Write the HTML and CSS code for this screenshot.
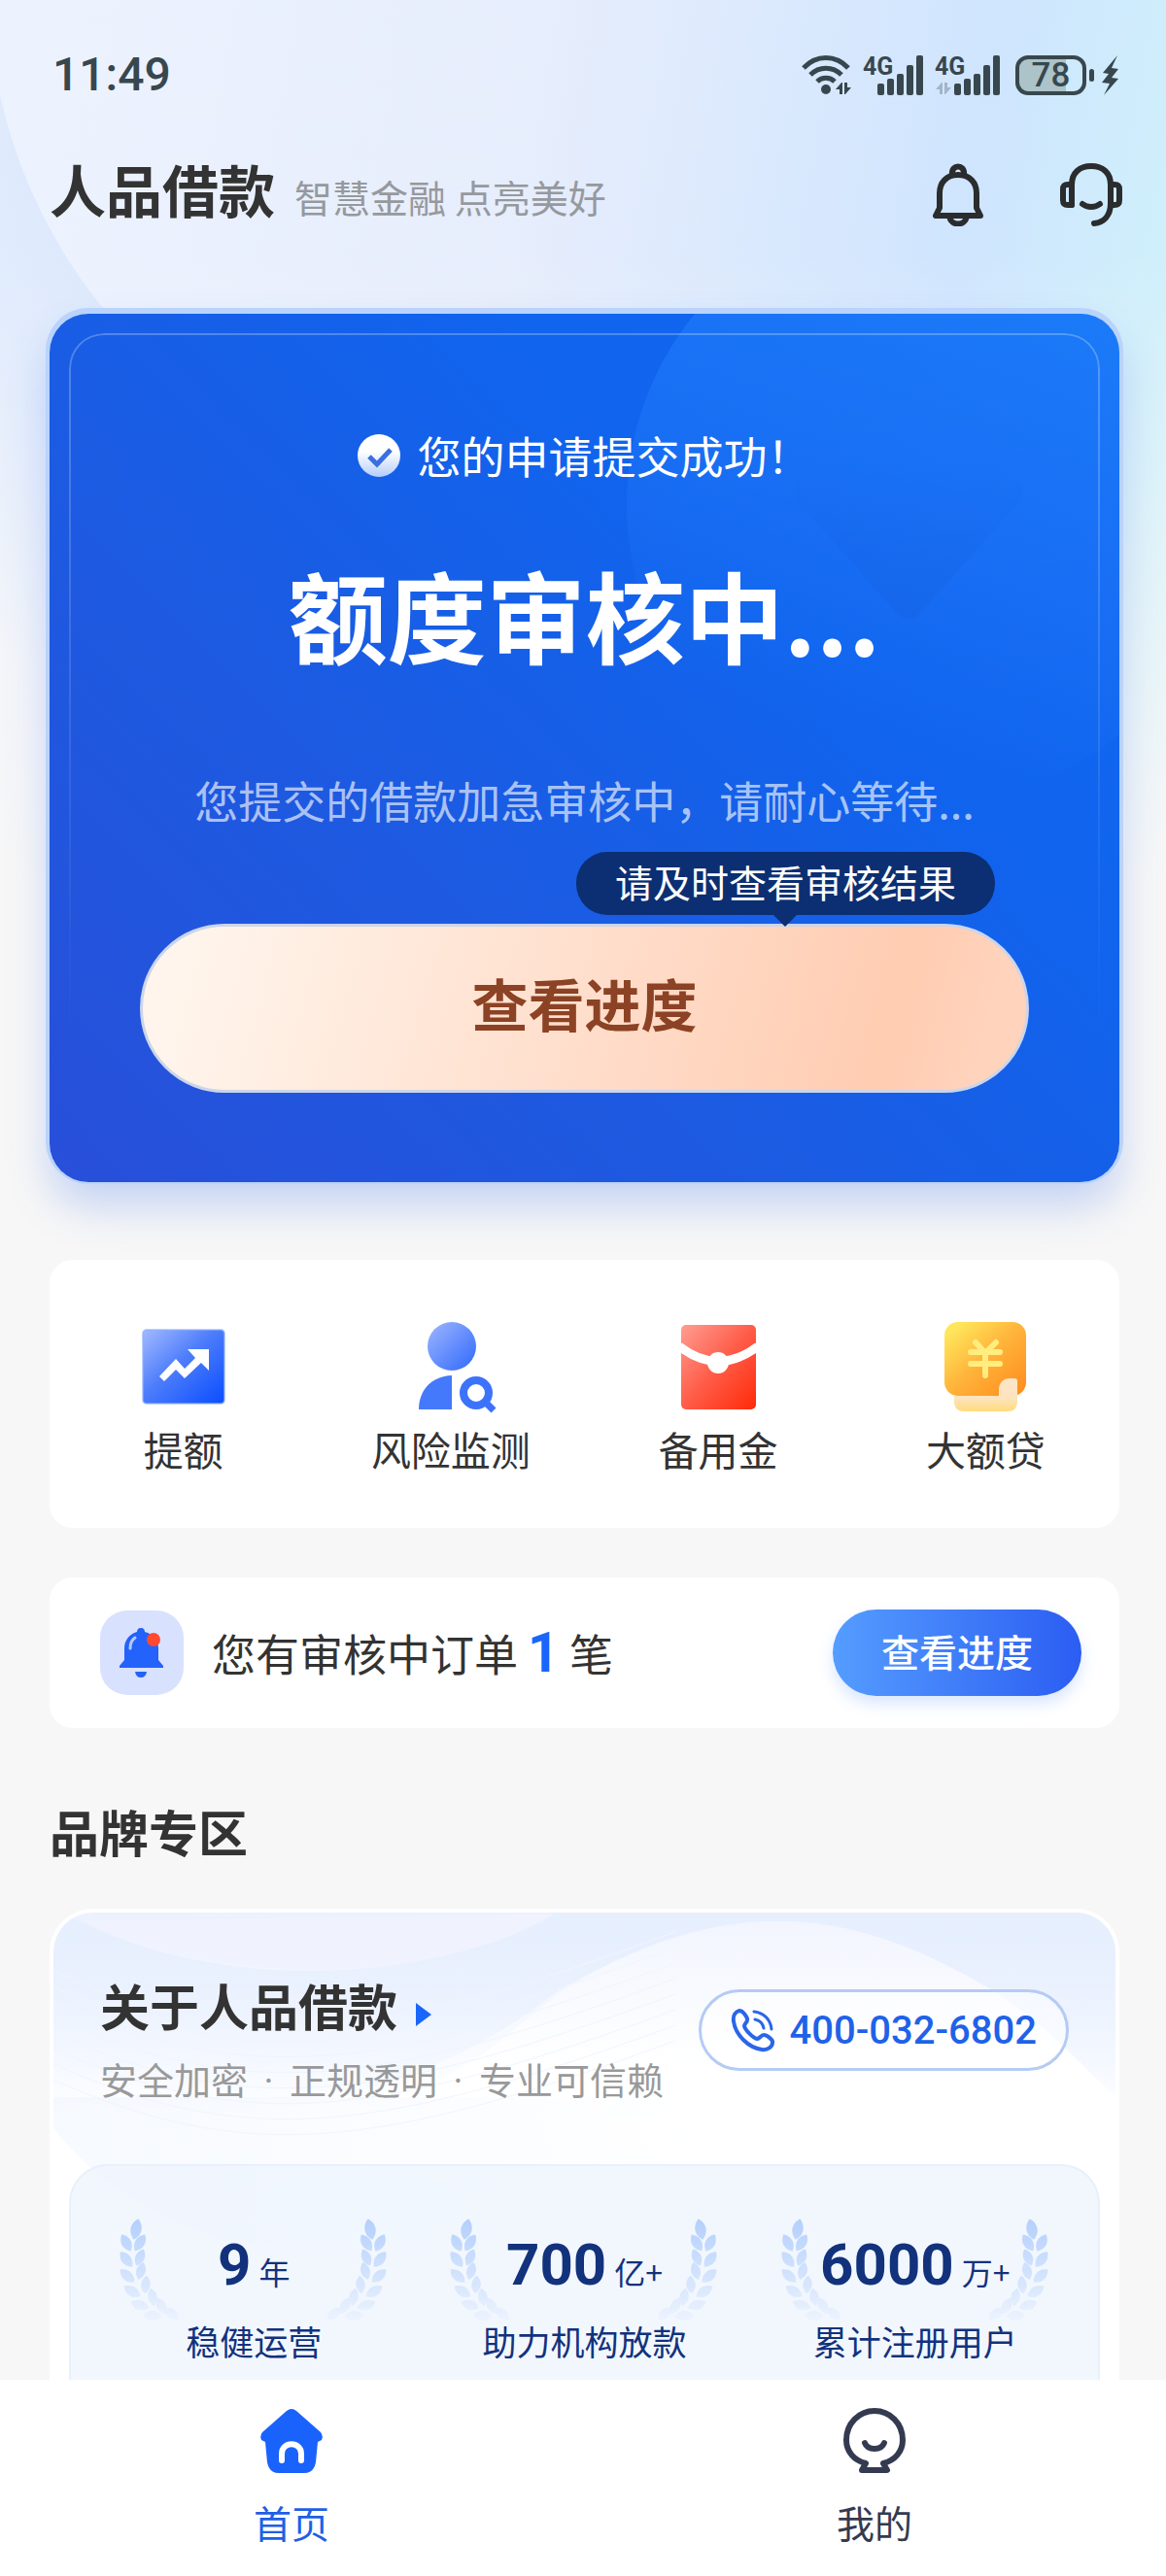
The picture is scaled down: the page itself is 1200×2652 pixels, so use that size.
FILE: index.html
```html
<!DOCTYPE html>
<html lang="zh-CN">
<head>
    <meta charset="UTF-8">
    <meta name="viewport" content="width=device-width, initial-scale=1.0">
    <title>人品借款</title>
    <link rel="stylesheet" href="styles.css">
</head>
<body>
    <svg class="defs" width="0" height="0" aria-hidden="true">
        <defs>
            <path id="leaf" d="M0 -11C7 -5 8 4 0 11C-8 4 -7 -5 0 -11Z"/>
            <g id="branch">
                <use href="#leaf" transform="translate(17 11) rotate(12)"/>
                <use href="#leaf" transform="translate(7 25) rotate(-28) scale(.9)"/>
                <use href="#leaf" transform="translate(21 25) rotate(32) scale(.9)"/>
                <use href="#leaf" transform="translate(7 42) rotate(-38) scale(.9)"/>
                <use href="#leaf" transform="translate(21 40) rotate(24) scale(.85)"/>
                <use href="#leaf" transform="translate(8 59) rotate(-48) scale(.9)"/>
                <use href="#leaf" transform="translate(22 54) rotate(16) scale(.85)"/>
                <use href="#leaf" transform="translate(13 75) rotate(-58) scale(.9)"/>
                <use href="#leaf" transform="translate(27 68) rotate(5) scale(.85)"/>
                <use href="#leaf" transform="translate(21 89) rotate(-72) scale(.9)"/>
                <use href="#leaf" transform="translate(34 81) rotate(-10) scale(.85)"/>
                <use href="#leaf" transform="translate(34 100) rotate(-85) scale(.9)"/>
                <use href="#leaf" transform="translate(43 90) rotate(-28) scale(.85)"/>
                <use href="#leaf" transform="translate(54 98) rotate(-50) scale(.85)"/>
            </g>
            <symbol id="wreath" viewBox="0 0 275 115">
                <use href="#branch"/>
                <use href="#branch" transform="translate(275 0) scale(-1 1)"/>
            </symbol>
            <symbol id="bars" viewBox="0 0 47 41">
                <rect x="0" y="29" width="7" height="12" rx="2"/>
                <rect x="10" y="24" width="7" height="17" rx="2"/>
                <rect x="20" y="19" width="7" height="22" rx="2"/>
                <rect x="30" y="10" width="7" height="31" rx="2"/>
                <rect x="40" y="0" width="7" height="41" rx="2"/>
            </symbol>
            <symbol id="updown" viewBox="0 0 16 12">
                <path d="M0 7L6 0H7V12H4V7ZM9 0H12V5H16L10 12H9Z"/>
            </symbol>
        </defs>
    </svg>

    <div class="app">
        <div class="status-bar">
            <span class="time">11:49</span>
            <div class="status-icons">
                <svg class="wifi" width="51" height="41" viewBox="0 0 51 41">
                    <g fill="none" stroke="#38474e" stroke-width="5">
                        <path d="M2 13C15 -1 35 -1 48 13"/>
                        <path d="M9 20C18 11 32 11 41 20"/>
                        <path d="M16 27C21 22 29 22 34 27"/>
                    </g>
                    <circle cx="25" cy="35" r="5" fill="#38474e"/>
                    <use href="#updown" x="35" y="28" width="16" height="12" fill="#38474e"/>
                </svg>
                <svg class="signal" width="62" height="41" viewBox="0 0 62 41" fill="#38474e">
                    <text x="0" y="20">4G</text>
                    <use href="#bars" x="15" y="0" width="47" height="41"/>
                </svg>
                <svg class="signal" width="67" height="41" viewBox="0 0 67 41" fill="#38474e">
                    <text x="0" y="20">4G</text>
                    <use href="#updown" x="1" y="28" width="16" height="12" opacity=".3"/>
                    <use href="#bars" x="20" y="0" width="47" height="41"/>
                </svg>
                <span class="battery">78</span>
                <svg class="bolt" width="18" height="41" viewBox="0 0 18 41">
                    <path d="M16 0L1 18L7 19L0 28L8 29L2 41L17 24L10 23L17 14L10 13Z" fill="#38474e"/>
                </svg>
            </div>
        </div>

        <header class="header">
            <h1>人品借款</h1>
            <p>智慧金融 点亮美好</p>
            <div class="header-actions">
                <a href="#" aria-label="消息">
                    <svg width="52" height="65" viewBox="0 0 52 65" fill="none" stroke="#2a2c2e" stroke-width="6" stroke-linejoin="round" stroke-linecap="round">
                        <path d="M20 11C19 1 33 1 32 11"/>
                        <path d="M26 12C14 12 7 20 7 31V46L3 54H49L45 46V31C45 20 38 12 26 12Z"/>
                        <path d="M17 55C19 65 33 65 35 55"/>
                    </svg>
                </a>
                <a href="#" aria-label="客服">
                    <svg width="64" height="65" viewBox="0 0 64 65" fill="none" stroke="#2a2c2e" stroke-width="6" stroke-linejoin="round" stroke-linecap="round">
                        <path d="M12 43V22C12 10 20 3 32 3S52 10 52 22V41C52 54 45 61 35 62"/>
                        <path d="M12 22H8C4 22 3 24 3 27V38C3 41 4 43 8 43H12"/>
                        <path d="M52 22H56C60 22 61 24 61 27V38C61 41 60 43 56 43H52"/>
                        <path d="M23 42C28 46 36 46 41 42"/>
                    </svg>
                </a>
            </div>
        </header>

        <main>
            <section class="hero">
                <svg class="hero-art" width="507" height="506" viewBox="0 0 507 506" aria-hidden="true">
                    <defs>
                        <linearGradient id="orb" x1=".7" y1="0" x2=".4" y2="1">
                            <stop offset=".1" stop-color="#2490ff" stop-opacity=".5"/>
                            <stop offset=".55" stop-color="#2a84ff" stop-opacity=".3"/>
                            <stop offset=".9" stop-color="#2a84ff" stop-opacity="0"/>
                        </linearGradient>
                        <linearGradient id="gem" x1="0" y1="0" x2="0" y2="1">
                            <stop offset=".35" stop-color="#1560e0" stop-opacity="0"/>
                            <stop offset="1" stop-color="#1560e0" stop-opacity=".4"/>
                        </linearGradient>
                    </defs>
                    <circle cx="309" cy="196" r="309" fill="url(#orb)"/>
                    <path d="M180 170L276 74Q290 60 304 74L400 170Q414 184 400 198L304 306Q290 322 276 306L180 198Q166 184 180 170Z" fill="url(#gem)"/>
                </svg>
                <p class="hero-status">
                    <svg width="45" height="45" viewBox="0 0 45 45" aria-hidden="true">
                        <defs>
                            <linearGradient id="tick" x1="0" y1="0" x2="0" y2="1">
                                <stop offset=".4" stop-color="#fff"/>
                                <stop offset="1" stop-color="#b5cdfb"/>
                            </linearGradient>
                        </defs>
                        <circle cx="22" cy="22" r="22" fill="url(#tick)"/>
                        <path d="M12 23L20 31L34 16" fill="none" stroke="#3b6fe0" stroke-width="5"/>
                    </svg>
                    您的申请提交成功！
                </p>
                <h2>额度审核中...</h2>
                <p class="hero-note">您提交的借款加急审核中，请耐心等待...</p>
                <div class="hero-action">
                    <span class="tooltip">请及时查看审核结果</span>
                    <button type="button" class="progress-btn">查看进度</button>
                </div>
            </section>

            <nav class="menu card">
                <a href="#">
                    <svg width="86" height="96" viewBox="0 0 86 96" aria-hidden="true">
                        <defs>
                            <linearGradient id="m1" x1="0" y1="0" x2="1" y2="1">
                                <stop offset="0" stop-color="#a3b9ff"/>
                                <stop offset=".45" stop-color="#4d7dfb"/>
                                <stop offset="1" stop-color="#0a4dff"/>
                            </linearGradient>
                        </defs>
                        <rect x="1" y="10" width="84" height="76" rx="4" fill="url(#m1)" stroke="#8fb0ff" stroke-opacity=".6" stroke-width="2"/>
                        <path d="M18 58L35 40L44 50L55 39L47 30H69V52L61 44L44 60L35 51L23 63Z" fill="#fff"/>
                    </svg>
                    提额
                </a>
                <a href="#">
                    <svg width="96" height="96" viewBox="-14 0 96 96" aria-hidden="true">
                        <defs>
                            <linearGradient id="m2" x1="0" y1="0" x2="1" y2="1">
                                <stop offset="0" stop-color="#9fb6ff"/>
                                <stop offset="1" stop-color="#2f69fb"/>
                            </linearGradient>
                        </defs>
                        <circle cx="35" cy="27" r="25" fill="url(#m2)"/>
                        <path d="M1 92C1 73 13 58 35 57V92Z" fill="#4579fb"/>
                        <circle cx="60" cy="75" r="13" fill="none" stroke="#3d72fb" stroke-width="8"/>
                        <path d="M70 85L78 93" stroke="#3d72fb" stroke-width="7"/>
                    </svg>
                    风险监测
                </a>
                <a href="#">
                    <svg width="77" height="96" viewBox="0 0 77 96" aria-hidden="true">
                        <defs>
                            <linearGradient id="m3" x1="0" y1="0" x2="1" y2="1">
                                <stop offset="0" stop-color="#ff9d92"/>
                                <stop offset=".5" stop-color="#ff5c48"/>
                                <stop offset="1" stop-color="#ff2a08"/>
                            </linearGradient>
                        </defs>
                        <rect x="0" y="5" width="77" height="87" rx="5" fill="url(#m3)"/>
                        <path d="M-2 27Q38 58 79 27" fill="none" stroke="#fff" stroke-width="9"/>
                        <circle cx="38" cy="44" r="11" fill="#fff"/>
                    </svg>
                    备用金
                </a>
                <a href="#">
                    <svg width="86" height="96" viewBox="0 0 86 96" aria-hidden="true">
                        <defs>
                            <linearGradient id="m4" x1="0" y1="0" x2="1" y2="1">
                                <stop offset=".1" stop-color="#ffe65c"/>
                                <stop offset=".5" stop-color="#ffb33a"/>
                                <stop offset="1" stop-color="#ff8a1c"/>
                            </linearGradient>
                            <linearGradient id="m4b" x1="0" y1="0" x2="0" y2="1">
                                <stop offset="0" stop-color="#fce5c8"/>
                                <stop offset=".6" stop-color="#fde4bd"/>
                                <stop offset="1" stop-color="#ffdb7c"/>
                            </linearGradient>
                        </defs>
                        <rect x="1" y="2" width="84" height="76" rx="14" fill="url(#m4)"/>
                        <path d="M11 78H57V72C57 64 62 60 68 60H73Q76 60 76 63V84Q76 94 66 94H22Q11 94 11 84Z" fill="url(#m4b)"/>
                        <path d="M33 23L43 34L54 23M28 33H58M28 45H58M43 34V57" fill="none" stroke="#ffed80" stroke-width="6" stroke-linecap="round"/>
                    </svg>
                    大额贷
                </a>
            </nav>

            <section class="order card">
                <svg width="86" height="87" viewBox="0 0 86 87" aria-hidden="true">
                    <rect width="86" height="87" rx="28" fill="#d8e2fe"/>
                    <path d="M42 18C45 18 46 20 46 22C55 24 60 31 60 39V51L65 57V59H20V57L25 51V39C25 31 30 24 38 22C38 20 39 18 42 18Z" fill="#2362fb"/>
                    <path d="M36 63H48Q47 69 42 69T36 63Z" fill="#2362fb"/>
                    <path d="M31 39C31 33 33 30 36 28" fill="none" stroke="#b4cbff" stroke-width="3" stroke-linecap="round"/>
                    <circle cx="55" cy="30" r="7" fill="#ff4a30"/>
                </svg>
                <p>您有审核中订单 <b>1</b> 笔</p>
                <button type="button" class="order-btn">查看进度</button>
            </section>

            <h2 class="section-title">品牌专区</h2>

            <section class="brand">
                <svg class="brand-waves" viewBox="0 0 1093 480" preserveAspectRatio="none" aria-hidden="true">
                    <defs>
                        <linearGradient id="band" x1="0" y1="0" x2="0" y2="1">
                            <stop offset="0" stop-color="#e6effe"/>
                            <stop offset="1" stop-color="#e6effe" stop-opacity="0"/>
                        </linearGradient>
                        <linearGradient id="arch" x1="0" y1="0" x2="0" y2="1">
                            <stop offset="0" stop-color="#f2f5fe"/>
                            <stop offset=".5" stop-color="#fff"/>
                        </linearGradient>
                        <linearGradient id="edge" x1="0" y1="0" x2="1" y2="0">
                            <stop offset="0" stop-color="#eaf2fe"/>
                            <stop offset="1" stop-color="#eaf2fe" stop-opacity="0"/>
                        </linearGradient>
                        <path id="thread" d="M0 60C200 150 340 130 640 20"/>
                    </defs>
                    <path d="M0 0H515C400 70 180 85 30 10L0 0V210C260 230 420 160 520 80C680 -10 800 -10 930 60C1010 100 1050 150 1093 190V0Z" fill="url(#band)"/>
                    <path d="M30 8C180 82 400 70 515 2Z" fill="#f0f3fe"/>
                    <path d="M380 180C450 150 480 110 540 70C680 -10 800 -10 930 60C1010 100 1050 150 1093 190V300H380Z" fill="url(#arch)"/>
                    <path d="M0 222Q60 300 180 340H0Z" fill="#fff"/>
                    <path d="M0 222Q60 300 180 340H700V190H0Z" fill="url(#edge)" opacity=".4"/>
                    <g fill="none" stroke="#f0f5fe" stroke-width="1">
                        <use href="#thread" y="0"/>
                        <use href="#thread" y="16"/>
                        <use href="#thread" y="32"/>
                        <use href="#thread" y="48"/>
                        <use href="#thread" y="64"/>
                        <use href="#thread" y="80"/>
                        <use href="#thread" y="96"/>
                        <use href="#thread" y="112"/>
                    </g>
                </svg>
                <div class="brand-head">
                    <div>
                        <h3><a href="#">关于人品借款</a></h3>
                        <p>安全加密 <i>·</i> 正规透明 <i>·</i> 专业可信赖</p>
                    </div>
                    <a class="phone" href="tel:400-032-6802">
                        <svg width="46" height="46" viewBox="0 0 46 46" fill="none" stroke="#2a66e8" stroke-width="4" stroke-linecap="round" stroke-linejoin="round" aria-hidden="true">
                            <path d="M9 3C5 4 2 8 3 14C5 28 18 41 32 43C38 44 43 40 43 36C44 33 37 28 34 28C31 28 30 32 27 32C23 31 15 23 14 19C14 16 18 15 17 11C16 8 12 3 9 3Z"/>
                            <path d="M24 4C34 5 41 12 42 22M25 12C30 13 33 16 34 21" stroke-width="3"/>
                        </svg>
                        400-032-6802
                    </a>
                </div>
                <div class="stats">
                    <div class="stat">
                        <svg class="wreath" width="275" height="115" aria-hidden="true"><use href="#wreath"/></svg>
                        <p class="figure"><b>9</b>年</p>
                        <p>稳健运营</p>
                    </div>
                    <div class="stat">
                        <svg class="wreath" width="275" height="115" aria-hidden="true"><use href="#wreath"/></svg>
                        <p class="figure"><b>700</b>亿+</p>
                        <p>助力机构放款</p>
                    </div>
                    <div class="stat">
                        <svg class="wreath" width="275" height="115" aria-hidden="true"><use href="#wreath"/></svg>
                        <p class="figure"><b>6000</b>万+</p>
                        <p>累计注册用户</p>
                    </div>
                </div>
            </section>
        </main>

        <nav class="tab-bar">
            <a href="#" class="active">
                <svg width="66" height="68" viewBox="0 0 66 68" aria-hidden="true">
                    <path d="M28 3Q33 -1 38 3L63 25Q66 29 64 33L60 35L58 56Q56 67 46 67H20Q10 67 8 56L6 35L2 33Q0 29 3 25Z" fill="#1a62fc"/>
                    <path d="M23 54V47C23 34 43 34 43 47V54" fill="none" stroke="#fff" stroke-width="6" stroke-linecap="round"/>
                </svg>
                首页
            </a>
            <a href="#">
                <svg width="66" height="68" viewBox="0 0 66 68" fill="none" stroke="#343a50" stroke-width="6" stroke-linejoin="round" stroke-linecap="round" aria-hidden="true">
                    <path d="M24 57C12 54 4 45 4 33C4 16 17 3 33 3S62 16 62 33C62 45 54 54 42 57L46 64H20Z"/>
                    <path d="M23 36C26 44 40 44 43 36"/>
                </svg>
                我的
            </a>
        </nav>
    </div>
</body>
</html>
```

FILE: styles.css
```css
* {
    box-sizing: border-box;
}
body {
    margin: 0;
    background: #f7f7f7;
    color: #333;
    font-family: "Noto Sans CJK SC", sans-serif;
    font-size: 39px;
}
h1, h2, h3, p {
    margin: 0;
}
a {
    color: inherit;
    text-decoration: none;
}
button {
    border: none;
    padding: 0;
    font-family: inherit;
    cursor: pointer;
}
svg {
    display: block;
    flex: none;
}
.defs {
    position: absolute;
}
.app {
    position: relative;
    display: flex;
    flex-direction: column;
    min-height: 100vh;
    background:
        linear-gradient(to bottom, rgba(247,247,247,0) 260px, #f7f7f7 900px),
        linear-gradient(100deg, #edf3fe 0%, #e6edfc 35%, #cfe5fe 62%, #cff2fa 78%, #def8fb 100%);
}
.app::before {
    content: "";
    position: absolute;
    left: 0;
    top: 0;
    width: 300px;
    height: 800px;
    background: radial-gradient(circle at 518px -17px, transparent 530px, rgba(205,223,251,0.45) 531px, rgba(225,235,251,0) 860px);
}

/* Status bar */
.status-bar {
    position: relative;
    display: flex;
    align-items: center;
    justify-content: space-between;
    height: 154px;
    padding: 0 48px 0 54px;
    color: #38474e;
    font-family: Roboto, sans-serif;
}
.time {
    font-size: 48px;
    font-weight: 500;
    line-height: 56px;
}
.status-icons {
    display: flex;
    align-items: center;
    gap: 12px;
}
.signal {
    overflow: visible;
}
.signal text {
    font-size: 25px;
    font-weight: 700;
}
.battery {
    position: relative;
    width: 73px;
    height: 41px;
    margin: 0 4px;
    border: 4px solid #38474e;
    border-radius: 13px;
    background: linear-gradient(to right, #abc3c9 74%, transparent 74%);
    font-size: 35px;
    font-weight: 500;
    line-height: 34px;
    text-align: center;
}
.battery::after {
    content: "";
    position: absolute;
    right: -12px;
    top: 10px;
    width: 5px;
    height: 13px;
    border-radius: 3px;
    background: #38474e;
}

/* Header */
.header {
    position: relative;
    display: flex;
    align-items: baseline;
    height: 92px;
    padding: 0 45px 0 51px;
    line-height: 80px;
}
.header h1 {
    font-size: 58px;
}
.header p {
    margin-left: 20px;
    color: #96999d;
}
.header-actions {
    display: flex;
    align-self: center;
    gap: 79px;
    margin-left: auto;
}

main {
    display: flex;
    flex: 1;
    flex-direction: column;
    padding: 77px 48px 0 51px;
}
.card {
    border-radius: 24px;
    background: #fff;
}

/* Hero */
.hero {
    position: relative;
    display: flex;
    flex-direction: column;
    align-items: center;
    padding: 114px 93px 92px;
    border-radius: 40px;
    background: linear-gradient(45deg, #284fd9 0%, #1d5ae1 35%, #1064ee 68%, #1268f2 100%);
    box-shadow: 0 -2px 0 4px #b9d3fb, 0 24px 44px rgba(52,104,230,0.26);
    color: #fff;
}
.hero-art {
    position: absolute;
    right: 0;
    top: 0;
    border-radius: 0 40px 0 0;
}
.hero::after {
    content: "";
    position: absolute;
    inset: 20px 20px 60px;
    border: 2px solid rgba(255,255,255,0.25);
    border-bottom: none;
    border-radius: 36px;
    -webkit-mask-image: linear-gradient(to bottom, #000, transparent 90%);
    mask-image: linear-gradient(to bottom, #000, transparent 90%);
    pointer-events: none;
}
.hero-status {
    position: relative;
    display: flex;
    align-items: center;
    gap: 16px;
    font-size: 45px;
    line-height: 64px;
}
.hero h2 {
    position: relative;
    margin-top: 67px;
    font-size: 102px;
    line-height: 128px;
}
.hero-note {
    position: relative;
    margin-top: 96px;
    color: rgba(255,255,255,0.65);
    font-size: 45px;
    line-height: 64px;
}
.hero-action {
    position: relative;
    align-self: stretch;
    margin-top: 95px;
}
.tooltip {
    position: absolute;
    right: 35px;
    bottom: calc(100% + 9px);
    padding: 0 40px 5px;
    border-radius: 32px;
    background: #0b2f72;
    line-height: 60px;
    white-space: nowrap;
}
.tooltip::after {
    content: "";
    position: absolute;
    left: 50%;
    top: 100%;
    margin-left: -12px;
    border: 12px solid transparent;
    border-top-color: #0b2f72;
    border-bottom: none;
}
.progress-btn {
    display: block;
    width: 100%;
    height: 174px;
    padding-bottom: 12px;
    border: 3px solid #ccd5ea;
    border-radius: 87px;
    background: linear-gradient(105deg, #fff5ec 5%, #ffdfcd 48%, #ffccb1 84%, #ffd3bc 94%);
    color: #8c4224;
    font-size: 58px;
    font-weight: 700;
}

/* Menu */
.menu {
    display: grid;
    grid-template-columns: repeat(4, 1fr);
    margin-top: 80px;
    padding: 62px 0 52px;
    font-size: 41px;
    line-height: 60px;
}
.menu a {
    display: flex;
    flex-direction: column;
    align-items: center;
    gap: 6px;
}

/* Order */
.order {
    display: flex;
    align-items: center;
    margin-top: 51px;
    padding: 33px 39px 33px 52px;
    font-size: 45px;
    line-height: 64px;
}
.order p {
    margin-left: 29px;
}
.order b {
    color: #1a66fb;
    font-family: Roboto, sans-serif;
    font-size: 57px;
    line-height: 1;
}
.order-btn {
    width: 256px;
    height: 89px;
    padding-bottom: 6px;
    margin-left: auto;
    border-radius: 45px;
    background: linear-gradient(to right, #559dff, #2b5df2);
    box-shadow: 0 8px 16px rgba(66,130,250,0.2);
    color: #fff;
    font-size: 39px;
    font-weight: 500;
}

.section-title {
    margin: 74px 0 48px;
    font-size: 51px;
    line-height: 64px;
}

/* Brand */
.brand {
    position: relative;
    display: flex;
    flex: 1;
    flex-direction: column;
    padding: 63px 16px 0;
    border: 4px solid #fff;
    border-bottom: none;
    border-radius: 45px 45px 0 0;
    background: linear-gradient(to bottom, #ebf1fe, #fff 200px);
}
.brand-waves {
    position: absolute;
    left: 0;
    top: 0;
    width: 100%;
    height: 480px;
    border-radius: 41px 41px 0 0;
}
.brand-head {
    position: relative;
    display: flex;
    align-items: flex-start;
    justify-content: space-between;
    padding: 0 32px;
}
.brand h3 {
    font-size: 51px;
    line-height: 64px;
}
.brand h3 a::after {
    content: "";
    display: inline-block;
    margin-left: 19px;
    border: 12px solid transparent;
    border-left: 16px solid #1a66fb;
    border-right: none;
}
.brand-head p {
    margin-top: 20px;
    color: #999;
    font-size: 38px;
    line-height: 48px;
}
.brand-head i {
    margin: 0 8px;
    font-family: Roboto, sans-serif;
    font-style: normal;
}
.phone {
    display: flex;
    align-items: center;
    gap: 14px;
    height: 84px;
    margin-top: 16px;
    padding: 0 30px;
    border: 3px solid #b4cbf4;
    border-radius: 42px;
    background: rgba(255,255,255,0.5);
    color: #1f62e8;
    font-family: Roboto, sans-serif;
    font-size: 40px;
    font-weight: 500;
}
.stats {
    position: relative;
    display: grid;
    flex: 1;
    grid-template-columns: repeat(3, 1fr);
    margin-top: 61px;
    padding: 54px 18px 16px;
    border: 2px solid #e8f0fb;
    border-bottom: none;
    border-radius: 40px 40px 0 0;
    background: rgba(239,245,254,0.8);
    color: #12327c;
    font-size: 35px;
    line-height: 48px;
    text-align: center;
}
.stat {
    position: relative;
}
.wreath {
    position: absolute;
    left: 50%;
    top: 0;
    margin-left: -138px;
    fill: #b3cffc;
    -webkit-mask-image: linear-gradient(to bottom, #000, transparent);
    mask-image: linear-gradient(to bottom, #000, transparent);
}
.stat p {
    position: relative;
}
.stat .figure {
    height: 102px;
    font-size: 32px;
    line-height: 108px;
}
.figure b {
    margin-right: 8px;
    font-family: Roboto, sans-serif;
    font-size: 60px;
    line-height: 1;
}

/* Tab bar */
.tab-bar {
    position: sticky;
    bottom: 0;
    display: grid;
    grid-template-columns: 1fr 1fr;
    height: 203px;
    padding-top: 29px;
    background: #fff;
    line-height: 56px;
}
.tab-bar a {
    display: flex;
    flex-direction: column;
    align-items: center;
    gap: 21px;
    color: #343a50;
}
.tab-bar .active {
    color: #1f5fe6;
}
```
